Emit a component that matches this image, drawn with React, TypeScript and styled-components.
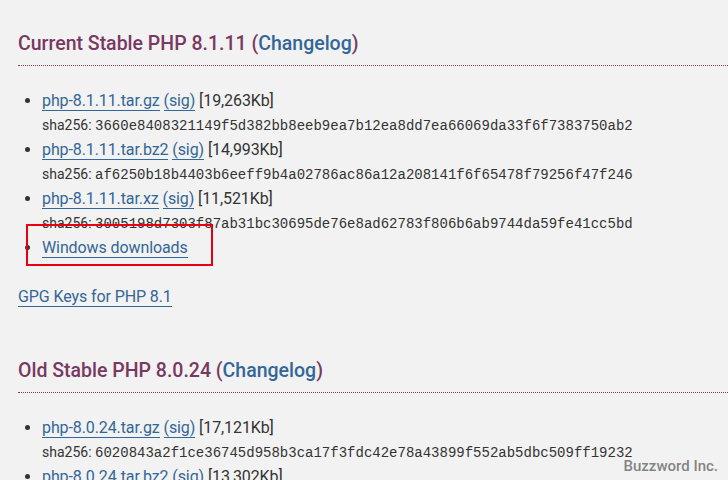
import React from 'react';
import styled, { createGlobalStyle } from 'styled-components';

const GlobalStyle = createGlobalStyle`
  html, body {
    margin: 0;
    padding: 0;
    background: #f2f2f2;
  }
  body {
    font-family: Roboto, "Noto Sans", sans-serif;
    color: #333;
    overflow: hidden;
  }
`;

const Page = styled.div`
  position: relative;
  width: 728px;
  height: 480px;
  overflow: hidden;
  padding: 29px 0 0 18px;
  box-sizing: border-box;
`;

const Section = styled.section`
  margin-bottom: 47px;
`;

const Heading = styled.h3`
  margin: 0;
  padding-bottom: 6px;
  font-size: 19.5px;
  line-height: 30px;
  font-weight: 500;
  color: #793862;
  border-bottom: 1px dotted #793862;
`;

const Link = styled.a`
  color: #369;
  text-decoration: none;
  border-bottom: 1px solid #369;
`;

const HeadLink = styled.a`
  color: #369;
  text-decoration: none;
`;

const Releases = styled.ul`
  margin: 23px 0 0;
  padding: 0 0 0 24px;
  font-size: 16px;
  line-height: 24px;
  letter-spacing: -0.1px;
`;

const Release = styled.li`
  &::marker {
    color: #333;
  }
`;

const Size = styled.span`
  color: #333;
`;

const Sha = styled.span`
  display: block;
  font-size: 14px;
  letter-spacing: 0;
  color: #333;
`;

const Hash = styled.span`
  font-family: "Liberation Mono", "DejaVu Sans Mono", monospace;
  font-size: 14px;
`;

const Marked = styled.span`
  position: relative;
  &::after {
    content: '';
    position: absolute;
    left: -16px;
    top: -14px;
    width: 187px;
    height: 42px;
    box-sizing: border-box;
    border: 2px solid #e60012;
  }
`;

const Keys = styled.p`
  margin: 25px 0 0;
  font-size: 16px;
  line-height: 24px;
  letter-spacing: -0.1px;
`;

const Watermark = styled.div`
  position: absolute;
  right: 10px;
  bottom: 5px;
  font-size: 15px;
  font-weight: 500;
  color: rgba(110, 110, 110, 0.85);
`;

type File = { name: string; size: string; sha: string };

const current: File[] = [
  { name: 'php-8.1.11.tar.gz', size: '19,263Kb', sha: '3660e8408321149f5d382bb8eeb9ea7b12ea8dd7ea66069da33f6f7383750ab2' },
  { name: 'php-8.1.11.tar.bz2', size: '14,993Kb', sha: 'af6250b18b4403b6eeff9b4a02786ac86a12a208141f6f65478f79256f47f246' },
  { name: 'php-8.1.11.tar.xz', size: '11,521Kb', sha: '3005198d7303f87ab31bc30695de76e8ad62783f806b6ab9744da59fe41cc5bd' },
];

const old: File[] = [
  { name: 'php-8.0.24.tar.gz', size: '17,121Kb', sha: '6020843a2f1ce36745d958b3ca17f3fdc42e78a43899f552ab5dbc509ff19232' },
  { name: 'php-8.0.24.tar.bz2', size: '13,302Kb', sha: '' },
];

const FileItem = ({ f }: { f: File }) => (
  <Release>
    <Link href="#">{f.name}</Link> <Link href="#">(sig)</Link> <Size>[{f.size}]</Size>
    {f.sha && (
      <Sha>
        sha256: <Hash>{f.sha}</Hash>
      </Sha>
    )}
  </Release>
);

export default function App() {
  return (
    <Page>
      <GlobalStyle />
      <Section>
        <Heading>
          Current Stable PHP 8.1.11 (<HeadLink href="#">Changelog</HeadLink>)
        </Heading>
        <Releases>
          {current.map((f) => (
            <FileItem key={f.name} f={f} />
          ))}
          <Release>
            <Marked>
              <Link href="#">Windows downloads</Link>
            </Marked>
          </Release>
        </Releases>
        <Keys>
          <Link href="#">GPG Keys for PHP 8.1</Link>
        </Keys>
      </Section>
      <Section>
        <Heading>
          Old Stable PHP 8.0.24 (<HeadLink href="#">Changelog</HeadLink>)
        </Heading>
        <Releases>
          {old.map((f) => (
            <FileItem key={f.name} f={f} />
          ))}
        </Releases>
      </Section>
      <Watermark>Buzzword Inc.</Watermark>
    </Page>
  );
}
